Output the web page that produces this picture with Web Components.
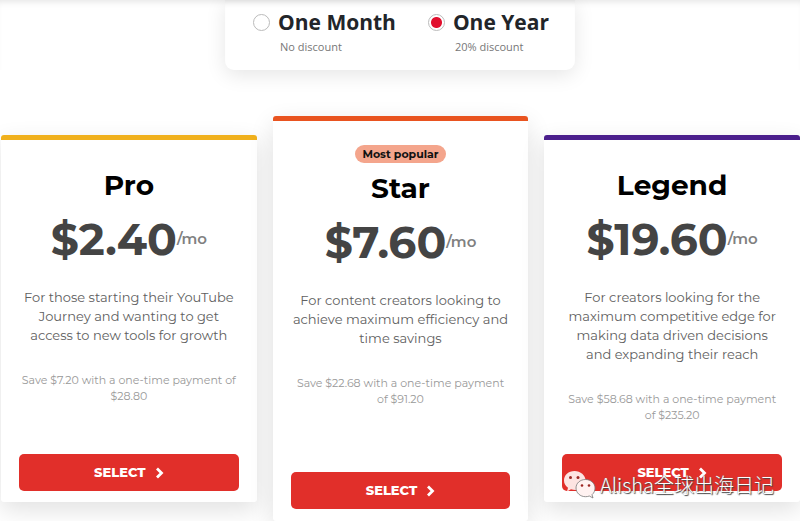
<!DOCTYPE html>
<html lang="en">
<head>
<meta charset="utf-8">
<meta name="viewport" content="width=device-width, initial-scale=1">
<title>Pricing</title>
<style>
body { margin: 0; background: #fff; font-family: Montserrat, Inter, "Noto Sans CJK SC", sans-serif; }
</style>
</head>
<body>
<pricing-page>
  <billing-switch slot="billing"></billing-switch>
  <plan-card style="--accent:#f0b01c" price="$2.40">
    <span slot="name">Pro</span>
    <span slot="text">For those starting their YouTube Journey and wanting to get access to new tools for growth</span>
    <span slot="saving">Save $7.20 with a one-time payment of $28.80</span>
  </plan-card>
  <plan-card featured style="--accent:#e95420" price="$7.60">
    <span slot="badge">Most popular</span>
    <span slot="name">Star</span>
    <span slot="text">For content creators looking to achieve maximum efficiency and time savings</span>
    <span slot="saving">Save $22.68 with a one-time payment of $91.20</span>
  </plan-card>
  <plan-card style="--accent:#4b1f8c" price="$19.60">
    <span slot="name">Legend</span>
    <span slot="text">For creators looking for the maximum competitive edge for making data driven decisions and expanding their reach</span>
    <span slot="saving">Save $58.68 with a one-time payment of $235.20</span>
  </plan-card>
  <channel-mark slot="mark">Alisha全球出海日记</channel-mark>
</pricing-page>

<script>
class PricingPage extends HTMLElement {
  constructor() {
    super();
    this.attachShadow({ mode: 'open' }).innerHTML = `
      <style>
        :host { display: block; position: relative; overflow: hidden; }
        header { display: flex; justify-content: center; box-shadow: inset 0 6px 6px -4px rgba(0,0,0,.1); }
        main { display: grid; grid-template-columns: repeat(3, minmax(0, 1fr)); gap: 16px; align-items: center; padding: 46px 0 0 1px; }
      </style>
      <header><slot name="billing"></slot></header>
      <main><slot></slot></main>
      <slot name="mark"></slot>`;
  }
}

class BillingSwitch extends HTMLElement {
  constructor() {
    super();
    this.attachShadow({ mode: 'open' }).innerHTML = `
      <style>
        :host { display: block; box-sizing: border-box; width: 350px; max-width: 100%; padding: 7px 26px 13px 28px; border-radius: 0 0 9px 9px;
          box-shadow: 0 5px 20px rgba(0,0,0,.1), inset 0 6px 6px -4px rgba(0,0,0,.06); font-family: "Segoe UI", "Open Sans", sans-serif; }
        fieldset { display: flex; justify-content: space-between; margin: 0; padding: 0; border: 0; }
        label { display: grid; grid-template-columns: 18px auto; column-gap: 7px; align-items: center; white-space: nowrap; }
        input { appearance: none; box-sizing: border-box; width: 17px; height: 17px; margin: 0; border: 1px solid #bbb; border-radius: 50%; background: #fff; }
        input:checked { background: radial-gradient(circle, #e10f2d 5px, #fff 6px); }
        b { font-size: 21px; line-height: 30px; color: #222529; }
        small { grid-column: 2; padding-left: 2px; font-size: 11px; line-height: 20px; color: #777; }
      </style>
      <fieldset aria-label="Billing period">
        <label><input type="radio" name="period"><b>One Month</b><small>No discount</small></label>
        <label><input type="radio" name="period" checked><b>One Year</b><small>20% discount</small></label>
      </fieldset>`;
  }
}

class PlanCard extends HTMLElement {
  constructor() {
    super();
    this.attachShadow({ mode: 'open' }).innerHTML = `
      <style>
        :host { display: block; border-top: 5px solid var(--accent); border-radius: 3px; background: #fff; text-align: center;
          padding: 25px 18px 11px; box-shadow: 0 8px 24px rgba(0,0,0,.12); --details: 166px; }
        :host([featured]) { padding: 24px 18px 12px; --details: 181px; }
        .badge { display: none; }
        :host([featured]) .badge { display: block; width: fit-content; margin: 0 auto 5px; padding: 0 7px; border-radius: 9px;
          background: #f4a58c; color: #111; font-size: 11px; font-weight: 700; line-height: 18px; }
        h2 { margin: 0 0 4px; font-size: 28px; font-weight: 700; line-height: 40px; color: #000; }
        .price { display: flex; justify-content: center; align-items: center; margin-bottom: 19px; color: #444; font-size: 44px; font-weight: 700; line-height: 60px; }
        .price small { color: #808080; font-size: 15px; font-weight: 600; }
        .details { min-height: var(--details); }
        p { margin: 0 0 27px; color: #606060; font-size: 13px; line-height: 19px; }
        .saving { margin: 0; color: #999; font-size: 11px; line-height: 16px; }
        button { display: flex; justify-content: center; align-items: center; gap: 9px; width: 100%; height: 37px; padding: 0 0 2px; border: 0; border-radius: 5px;
          background: #e12f2a; color: #fff; font: 800 13px/18px Montserrat, Inter, sans-serif; }
        svg { width: 9px; height: 12px; margin-top: 2px; }
      </style>
      <div class="badge"><slot name="badge"></slot></div>
      <h2><slot name="name"></slot></h2>
      <div class="price"><span class="amount"></span><small>/mo</small></div>
      <div class="details">
        <p><slot name="text"></slot></p>
        <p class="saving"><slot name="saving"></slot></p>
      </div>
      <button type="button">SELECT <svg viewBox="0 0 9 12" aria-hidden="true"><path d="M2 1.5 6.5 6 2 10.5" fill="none" stroke="#fff" stroke-width="2.8"/></svg></button>`;
    this.shadowRoot.querySelector('.amount').textContent = this.getAttribute('price');
  }
}

class ChannelMark extends HTMLElement {
  constructor() {
    super();
    this.attachShadow({ mode: 'open' }).innerHTML = `
      <style>
        :host { position: absolute; right: 26px; bottom: 21px; display: flex; align-items: center; gap: 4px; pointer-events: none; white-space: nowrap;
          color: #fff; font: 300 20px/30px "Noto Sans CJK SC", sans-serif; text-shadow: 1px 1px 1px #444, 0 0 1px #777; }
        svg { width: 33px; height: 30px; }
      </style>
      <svg viewBox="0 0 33 30" aria-hidden="true">
        <path d="M11.5 1C5.500 1 1 5 1 10.500c0 3 1.500 5.500 4 7.300L4 21.500l4-2.200c1.500.500 3 .700 4.500.700 5.500-.300 10-4.300 10-9.500S17.500 1 11.500 1Z" fill="#fde4e2"/>
        <circle cx="7.500" cy="7.500" r="1.500" fill="#9c2824"/><circle cx="15" cy="7.500" r="1.500" fill="#9c2824"/>
        <path d="M22.500 9.500c-5.300 0-9.500 3.700-9.500 8.500s4.200 8.700 9.500 8.700c1.300 0 2.600-.200 3.800-.700l3.700 2-1-3.300c2-1.600 3-4 3-6.700 0-4.800-4.200-8.500-9.500-8.500Z" fill="#fff2f1" stroke="#777" stroke-width=".8"/>
        <circle cx="19" cy="15.500" r="1.300" fill="#9c2824"/><circle cx="26" cy="15.500" r="1.300" fill="#9c2824"/>
      </svg>
      <span><slot></slot></span>`;
  }
}

customElements.define('pricing-page', PricingPage);
customElements.define('billing-switch', BillingSwitch);
customElements.define('plan-card', PlanCard);
customElements.define('channel-mark', ChannelMark);
</script>
</body>
</html>
